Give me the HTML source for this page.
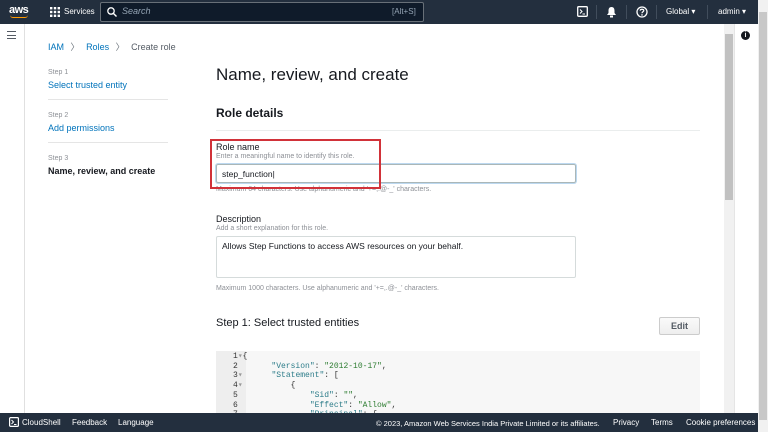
<!DOCTYPE html>
<html><head><meta charset="utf-8"><style>
*{margin:0;padding:0;box-sizing:border-box}
body{width:768px;height:432px;overflow:hidden;background:#fff;font-family:"Liberation Sans",Arial,sans-serif;position:relative}
.a{position:absolute}
.top{left:0;top:0;width:758px;height:24px;background:#232f3e}
.foot{left:0;top:413px;width:758px;height:19px;background:#232f3e;color:#fff;font-size:8px}
.foot span{position:absolute;top:5px;white-space:nowrap}
.lbl{color:#16191f;font-size:9px}
.hint{color:#8d9096;font-size:7px}
.link{color:#0073bb;font-size:9px}
</style></head><body>
<div class="a top">
  <div class="a" style="left:9px;top:4px;color:#fff;font-size:11px;font-weight:bold;letter-spacing:-0.5px">aws</div>
  <div class="a" style="left:10px;top:15px;width:18px;height:3px;border-bottom:1.5px solid #f90;border-radius:0 0 10px 10px"></div>
  <svg class="a" style="left:50px;top:7px" width="10" height="10"><g fill="#fff"><rect x="0" y="0" width="2.4" height="2.4"/><rect x="3.8" y="0" width="2.4" height="2.4"/><rect x="7.6" y="0" width="2.4" height="2.4"/><rect x="0" y="3.8" width="2.4" height="2.4"/><rect x="3.8" y="3.8" width="2.4" height="2.4"/><rect x="7.6" y="3.8" width="2.4" height="2.4"/><rect x="0" y="7.6" width="2.4" height="2.4"/><rect x="3.8" y="7.6" width="2.4" height="2.4"/><rect x="7.6" y="7.6" width="2.4" height="2.4"/></g></svg>
  <div class="a" style="left:64px;top:7px;color:#fff;font-size:8px">Services</div>
  <div class="a" style="left:100px;top:2px;width:324px;height:20px;background:#0f1b2a;border:1px solid #687078;border-radius:2px"></div>
  <svg class="a" style="left:107px;top:7px" width="10" height="10"><circle cx="4" cy="4" r="3.2" stroke="#fff" stroke-width="1.3" fill="none"/><path d="M6.5 6.5 L9.5 9.5" stroke="#fff" stroke-width="1.4"/></svg>
  <div class="a" style="left:122px;top:6px;color:#95a5b5;font-size:9px;font-style:italic">Search</div>
  <div class="a" style="left:392px;top:7px;color:#95a5b5;font-size:8px">[Alt+S]</div>
  <svg class="a" style="left:577px;top:6px" width="11" height="11"><rect x="0.7" y="0.7" width="9.6" height="9.6" rx="1" stroke="#fff" stroke-width="1.3" fill="none"/><path d="M3 3.5 L5 5.5 L3 7.5 M5.5 8 H8" stroke="#fff" stroke-width="1.1" fill="none"/></svg>
  <div class="a" style="left:596px;top:5px;width:1px;height:14px;background:#414d5c"></div>
  <svg class="a" style="left:606px;top:6px" width="11" height="12"><path d="M5.5 1 C3 1 2.5 3 2.5 5 L2.5 7 L1 9 H10 L8.5 7 L8.5 5 C8.5 3 8 1 5.5 1Z" fill="#fff"/><rect x="4" y="9.5" width="3" height="2" fill="#fff"/></svg>
  <div class="a" style="left:626px;top:5px;width:1px;height:14px;background:#414d5c"></div>
  <svg class="a" style="left:636px;top:6px" width="12" height="12"><circle cx="6" cy="6" r="5" stroke="#fff" stroke-width="1.3" fill="none"/><path d="M4.2 4.6 C4.2 2.8 7.8 2.8 7.8 4.6 C7.8 5.8 6 5.8 6 7.2" stroke="#fff" stroke-width="1.2" fill="none"/><circle cx="6" cy="8.9" r=".8" fill="#fff"/></svg>
  <div class="a" style="left:656px;top:5px;width:1px;height:14px;background:#414d5c"></div>
  <div class="a" style="left:666px;top:7px;color:#fff;font-size:8px">Global ▾</div>
  <div class="a" style="left:707px;top:5px;width:1px;height:14px;background:#414d5c"></div>
  <div class="a" style="left:718px;top:7px;color:#fff;font-size:8px">admin ▾</div>
</div>
<div class="a" style="left:24px;top:24px;width:1px;height:389px;background:#e0e0e0"></div>
<div class="a" style="left:7px;top:31px;width:9px;height:8px;border-top:1.5px solid #545b64;border-bottom:1.5px solid #545b64"></div>
<div class="a" style="left:7px;top:34.5px;width:9px;height:1.5px;background:#545b64"></div>
<div class="a" style="left:48px;top:40px;font-size:9px"><span style="color:#0073bb">IAM</span> <span style="color:#687078;margin:0 4px">〉</span> <span style="color:#0073bb">Roles</span> <span style="color:#687078;margin:0 4px">〉</span> <span style="color:#545b64">Create role</span></div>
<div class="a hint" style="left:48px;top:69px">Step 1</div>
<div class="a link" style="left:48px;top:80px">Select trusted entity</div>
<div class="a" style="left:48px;top:99px;width:120px;height:1px;background:#e5e5e5"></div>
<div class="a hint" style="left:48px;top:112px">Step 2</div>
<div class="a link" style="left:48px;top:123px">Add permissions</div>
<div class="a" style="left:48px;top:142px;width:120px;height:1px;background:#e5e5e5"></div>
<div class="a hint" style="left:48px;top:155px">Step 3</div>
<div class="a" style="left:48px;top:166px;font-size:9px;font-weight:bold;color:#16191f">Name, review, and create</div>
<div class="a" style="left:216px;top:65px;font-size:17px;color:#16191f">Name, review, and create</div>
<div class="a" style="left:216px;top:106px;font-size:12px;font-weight:bold;color:#16191f">Role details</div>
<div class="a" style="left:216px;top:130px;width:484px;height:1px;background:#eaeded"></div>
<div class="a lbl" style="left:216px;top:142px">Role name</div>
<div class="a hint" style="left:216px;top:153px">Enter a meaningful name to identify this role.</div>
<div class="a" style="left:216px;top:164px;width:360px;height:19px;border:1px solid #aab7b8;border-radius:2px;box-shadow:0 0 0 1px #bcd8f0"></div>
<div class="a" style="left:222px;top:169px;font-size:8.5px;color:#16191f">step_function|</div>
<div class="a hint" style="left:216px;top:186px">Maximum 64 characters. Use alphanumeric and '+=,.@-_' characters.</div>
<div class="a" style="left:210px;top:139px;width:171px;height:50px;border:2px solid #d13239"></div>
<div class="a lbl" style="left:216px;top:214px">Description</div>
<div class="a hint" style="left:216px;top:225px">Add a short explanation for this role.</div>
<div class="a" style="left:216px;top:236px;width:360px;height:42px;border:1px solid #d5dbdb;border-radius:2px"></div>
<div class="a" style="left:222px;top:241px;font-size:8.5px;color:#16191f">Allows Step Functions to access AWS resources on your behalf.</div>
<div class="a hint" style="left:216px;top:285px">Maximum 1000 characters. Use alphanumeric and '+=,.@-_' characters.</div>
<div class="a" style="left:216px;top:317px;font-size:11px;color:#16191f">Step 1: Select trusted entities</div>
<div class="a" style="left:659px;top:317px;width:41px;height:18px;border:1px solid #ccc;border-radius:2px;background:linear-gradient(#fafafa,#eee);font-size:9px;font-weight:bold;color:#545b64;text-align:center;line-height:16px">Edit</div>
<div class="a" style="left:216px;top:351px;width:484px;height:62px;background:#f7f7f7"></div>
<div class="a" style="left:216px;top:351px;width:30px;height:62px;background:#eeeeee"></div>
<pre class="a" style="left:233px;top:352px;font-family:'Liberation Mono',monospace;font-size:8px;line-height:9.7px;color:#333">1<span style="color:#999">▾</span>{
2       <span style="color:#2e7d8a">"Version"</span>: <span style="color:#2e7d32">"2012-10-17"</span>,
3<span style="color:#999">▾</span>      <span style="color:#2e7d8a">"Statement"</span>: [
4<span style="color:#999">▾</span>          {
5               <span style="color:#2e7d8a">"Sid"</span>: <span style="color:#2e7d32">""</span>,
6               <span style="color:#2e7d8a">"Effect"</span>: <span style="color:#2e7d32">"Allow"</span>,
7               <span style="color:#2e7d8a">"Principal"</span>: {</pre>
<div class="a" style="left:724px;top:24px;width:10px;height:389px;background:#f1f1f1"></div>
<div class="a" style="left:725px;top:34px;width:8px;height:166px;background:#c1c1c1"></div>
<div class="a" style="left:734px;top:24px;width:1px;height:389px;background:#e5e5e5"></div>
<div class="a" style="left:741px;top:31px;width:9px;height:9px;border-radius:50%;background:#16191f;color:#fff;font-size:7px;font-weight:bold;text-align:center;line-height:9px">i</div>
<div class="a" style="left:758px;top:0;width:10px;height:432px;background:#f1f1f1"></div>
<div class="a" style="left:759px;top:12px;width:8px;height:408px;background:#c8c8c8"></div>
<div class="a foot">
  <svg class="a" style="left:9px;top:4px" width="10" height="10"><rect x=".6" y=".6" width="8.8" height="8.8" rx="1" stroke="#fff" stroke-width="1.2" fill="none"/><path d="M2.5 3 L4.5 5 L2.5 7 M5 7.5 H7.5" stroke="#fff" stroke-width="1" fill="none"/></svg>
  <span style="left:22px">CloudShell</span>
  <span style="left:72px">Feedback</span>
  <span style="left:118px">Language</span>
  <span style="left:376px;font-size:7.5px;top:5.5px">© 2023, Amazon Web Services India Private Limited or its affiliates.</span>
  <span style="left:613px">Privacy</span>
  <span style="left:651px">Terms</span>
  <span style="left:686px">Cookie preferences</span>
</div>
</body></html>
